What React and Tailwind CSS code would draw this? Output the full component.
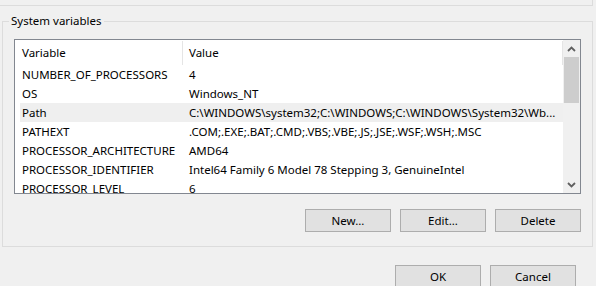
import React from 'react';

const rows = [
    { name: 'NUMBER_OF_PROCESSORS', value: '4' },
    { name: 'OS', value: 'Windows_NT' },
    { name: 'Path', value: 'C:\\WINDOWS\\system32;C:\\WINDOWS;C:\\WINDOWS\\System32\\Wb...', hot: true },
    { name: 'PATHEXT', value: '.COM;.EXE;.BAT;.CMD;.VBS;.VBE;.JS;.JSE;.WSF;.WSH;.MSC' },
    { name: 'PROCESSOR_ARCHITECTURE', value: 'AMD64' },
    { name: 'PROCESSOR_IDENTIFIER', value: 'Intel64 Family 6 Model 78 Stepping 3, GenuineIntel' },
    { name: 'PROCESSOR_LEVEL', value: '6' },
];

const Chevron = ({ down }) => (
    <svg width="9" height="6" viewBox="0 0 9 6" className={down ? 'rotate-180' : ''}>
        <path d="M1 5 L4.5 1.5 L8 5" fill="none" stroke="#606060" strokeWidth="1.8" />
    </svg>
);

const Button = ({ children }) => (
    <button className="w-[86px] h-[23px] bg-[#e1e1e1] border border-[#adadad] text-[11.5px] text-black leading-none">
        {children}
    </button>
);

export default function App() {
    return (
        <div className="w-[596px] h-[286px] bg-[#f0f0f0] overflow-hidden flex flex-col text-black" style={{ fontFamily: '"Noto Sans", sans-serif' }}>
            {/* previous group box edge */}
            <div className="w-[593px] h-[6px] border-b border-r border-[#dcdcdc] shrink-0" />

            {/* System variables group */}
            <div className="relative ml-[2px] mt-[15px] w-[591px] h-[226px] border border-[#dcdcdc] shrink-0 pl-[11px] pt-[17px]">
                <span className="absolute left-[6px] top-[-10px] px-[2px] bg-[#f0f0f0] text-[11.5px] leading-[18px]">System variables</span>

                <div className="w-[567px] h-[155px] border border-[#828790] bg-white flex overflow-hidden">
                    <div className="flex-1 overflow-hidden">
                        <div className="grid grid-cols-[168px_1fr] h-[25px] items-center text-[11.5px]">
                            <div className="pl-[7px] h-[24px] mt-[1px] flex items-center border-r border-[#e5e5e5]">Variable</div>
                            <div className="pl-[6px] h-[24px] mt-[1px] flex items-center border-r border-[#e5e5e5]">Value</div>
                        </div>
                        {rows.map(r => (
                            <div key={r.name} className={`ml-[5px] grid grid-cols-[163px_1fr] h-[19px] items-center text-[11.5px] whitespace-nowrap ${r.hot ? 'bg-[#efefef]' : ''}`}>
                                <div className="pl-[2px]">{r.name}</div>
                                <div className="pl-[6px]">{r.value}</div>
                            </div>
                        ))}
                    </div>
                    <div className="w-[17px] bg-[#f0f0f0] flex flex-col">
                        <div className="h-[17px] flex items-center justify-center"><Chevron /></div>
                        <div className="mx-[1px] h-[46px] bg-[#cdcdcd]" />
                        <div className="flex-1" />
                        <div className="h-[17px] flex items-center justify-center"><Chevron down /></div>
                    </div>
                </div>

                <div className="w-[567px] mt-[15px] flex justify-end gap-[9px]">
                    <Button>New...</Button>
                    <Button>Edit...</Button>
                    <Button>Delete</Button>
                </div>
            </div>

            <div className="w-[576px] mt-[18px] flex justify-end gap-[9px] shrink-0">
                <Button>OK</Button>
                <Button>Cancel</Button>
            </div>
        </div>
    );
}
